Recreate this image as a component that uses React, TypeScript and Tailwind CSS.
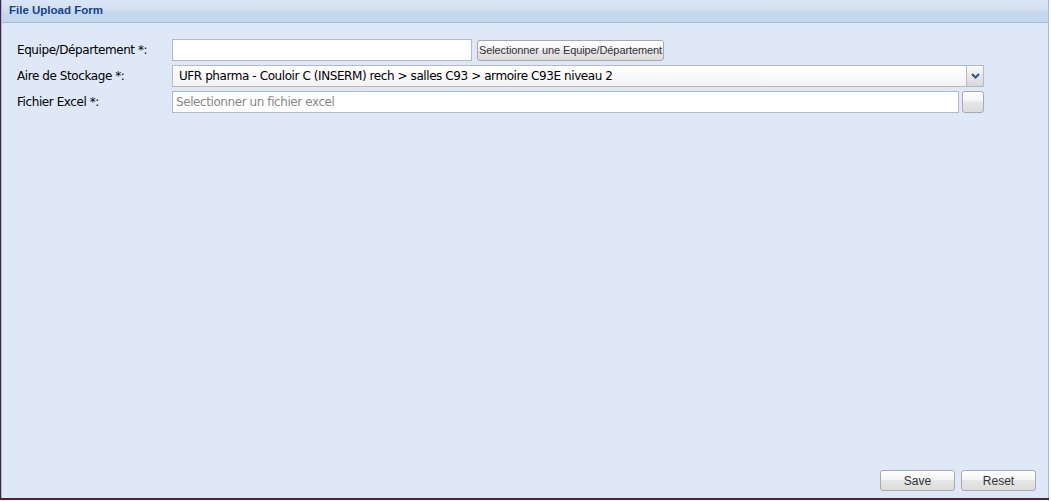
import React from "react";

const btn =
  "flex items-center justify-center whitespace-nowrap border border-[#a9a9a9] rounded-[3px] bg-[linear-gradient(#ffffff_0%,#f4f4f4_45%,#e6e6e6_50%,#dcdcdc_100%)] text-[11px] text-[#333] [font-family:'Liberation_Sans',Arial,sans-serif]";

export default function App() {
  return (
    <div className="w-[1051px] h-[501px] bg-white [font-family:'DejaVu_Sans',Tahoma,sans-serif] tracking-[-0.42px]">
      <div className="w-[1049px] h-[500px] flex flex-col border-l border-l-[#5a1f2a] border-b-2 border-b-[#5a1f2a] bg-[#99bbe8] pl-px pr-px">
        <div className="h-[23px] shrink-0 flex items-center pl-[7px] border-b border-[#99bbe8] bg-[linear-gradient(#dae6f4_0%,#d0def0_50%,#c6d8ee_55%,#c2d6ec_100%)]">
          <span className="text-[11.5px] font-bold text-[#15428b] tracking-normal [font-family:'Liberation_Sans',Tahoma,sans-serif]">File Upload Form</span>
        </div>
        <div className="flex-1 flex flex-col bg-[#dfe8f6] pl-[15px] pr-[1px] pt-[16px] pb-[7px] text-[12px] text-black">
          <div className="flex items-center h-[22px]">
            <div className="w-[155px] text-[12px]">Equipe/Département *:</div>
            <div className="w-[300px] h-[22px] border border-[#b5b8c8] bg-white"></div>
            <div className={btn + " ml-[5px] w-[187px] h-[21px] tracking-[-0.1px]"}>Selectionner une Equipe/Département</div>
          </div>
          <div className="flex items-center h-[22px] mt-[4px]">
            <div className="w-[155px]">Aire de Stockage *:</div>
            <div className="w-[812px] h-[22px] flex border border-[#b5b8c8] bg-[linear-gradient(#ffffff,#f3f3f3)]">
              <div className="flex-1 flex items-center pl-[6px] text-[12px]">UFR pharma - Couloir C (INSERM) rech &gt; salles C93 &gt; armoire C93E niveau 2</div>
              <div className="w-[17px] h-full border-l border-[#b5b8c8] bg-[linear-gradient(#fafafa,#e8e8e8_50%,#d8d8d8)] flex items-center justify-center">
                <svg width="9" height="6" viewBox="0 0 9 6"><path d="M1 1 L4.5 4.5 L8 1" stroke="#2f4f8f" strokeWidth="2" fill="none" /></svg>
              </div>
            </div>
          </div>
          <div className="flex items-center h-[22px] mt-[4px]">
            <div className="w-[155px]">Fichier Excel *:</div>
            <div className="w-[787px] h-[22px] border border-[#b5b8c8] bg-white flex items-center pl-[3px] text-[#888] text-[12px]">Selectionner un fichier excel</div>
            <div className={btn + " ml-[3px] w-[22px] h-[22px]"}></div>
          </div>
          <div className="flex-1"></div>
          <div className="flex justify-end gap-[6px] pr-[11px]">
            <div className={btn + " w-[75px] h-[21px] text-[12px] tracking-normal"}>Save</div>
            <div className={btn + " w-[75px] h-[21px] text-[12px] tracking-normal"}>Reset</div>
          </div>
        </div>
      </div>
    </div>
  );
}
